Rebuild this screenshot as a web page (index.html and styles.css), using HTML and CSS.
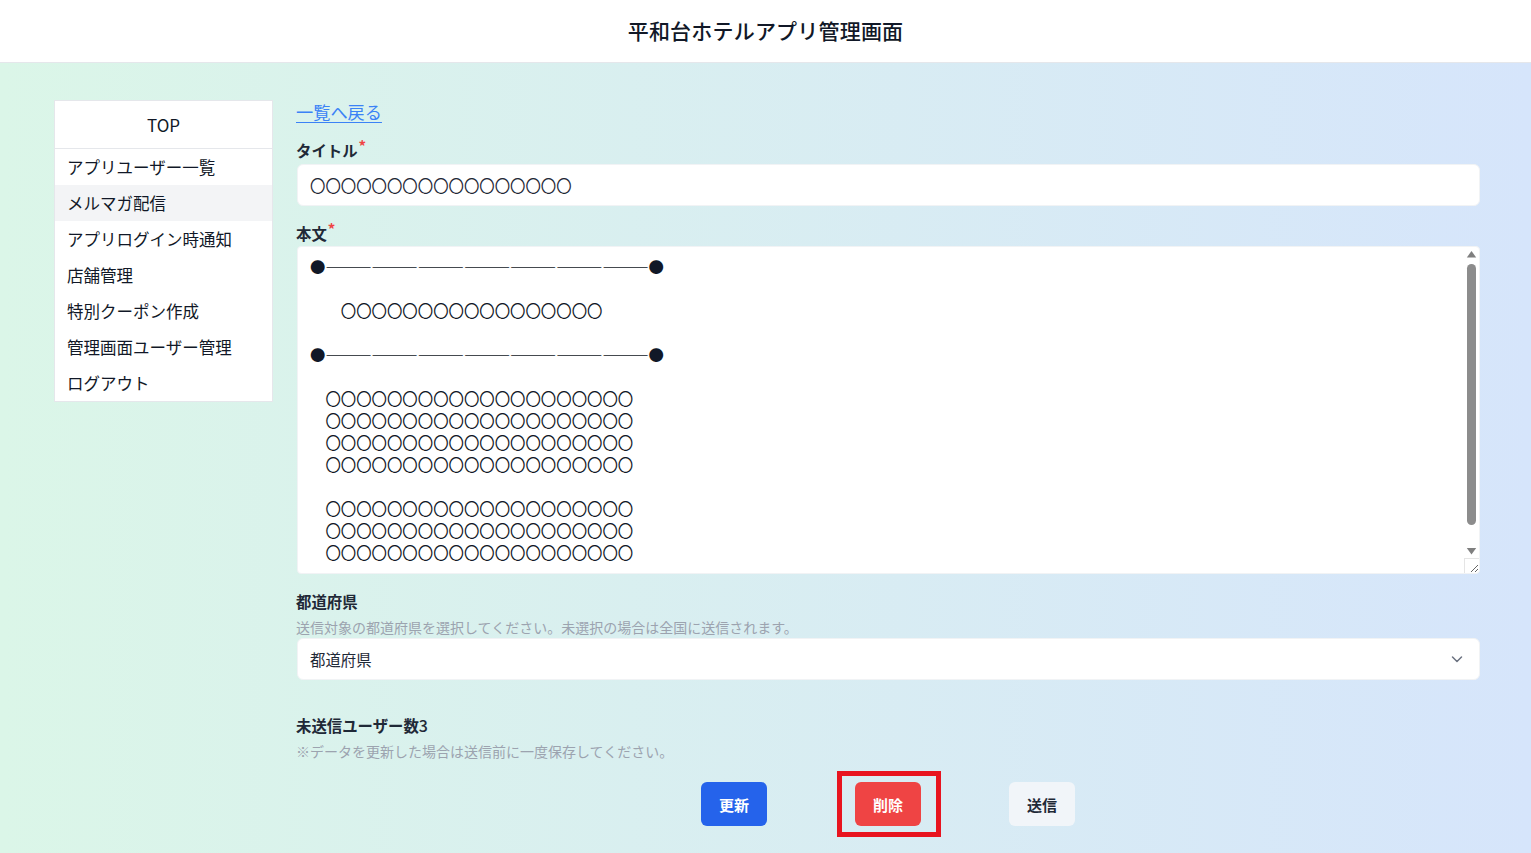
FILE: index.html
```html
<!DOCTYPE html>
<html lang="ja">
<head>
<meta charset="utf-8">
<title>平和台ホテルアプリ管理画面</title>
<link rel="stylesheet" href="styles.css">
</head>
<body>
<header class="header">
  <h1 class="header-title">平和台ホテルアプリ管理画面</h1>
</header>
<div class="page">
  <nav class="sidebar">
    <div class="sidebar-top">TOP</div>
    <ul class="sidebar-list">
      <li class="sidebar-item">アプリユーザー一覧</li>
      <li class="sidebar-item is-active">メルマガ配信</li>
      <li class="sidebar-item">アプリログイン時通知</li>
      <li class="sidebar-item">店舗管理</li>
      <li class="sidebar-item">特別クーポン作成</li>
      <li class="sidebar-item">管理画面ユーザー管理</li>
      <li class="sidebar-item">ログアウト</li>
    </ul>
  </nav>
  <main class="main">
    <a class="back-link" href="#">一覧へ戻る</a>
    <div class="field field-title">
      <label class="label">タイトル<span class="req">*</span></label>
      <input class="input" type="text" value="〇〇〇〇〇〇〇〇〇〇〇〇〇〇〇〇〇">
    </div>
    <div class="field field-body">
      <label class="label">本文<span class="req">*</span></label>
      <div class="textarea-wrap">
        <textarea class="textarea">●―――――――――――――――――――――●

　　〇〇〇〇〇〇〇〇〇〇〇〇〇〇〇〇〇

●―――――――――――――――――――――●

　〇〇〇〇〇〇〇〇〇〇〇〇〇〇〇〇〇〇〇〇
　〇〇〇〇〇〇〇〇〇〇〇〇〇〇〇〇〇〇〇〇
　〇〇〇〇〇〇〇〇〇〇〇〇〇〇〇〇〇〇〇〇
　〇〇〇〇〇〇〇〇〇〇〇〇〇〇〇〇〇〇〇〇

　〇〇〇〇〇〇〇〇〇〇〇〇〇〇〇〇〇〇〇〇
　〇〇〇〇〇〇〇〇〇〇〇〇〇〇〇〇〇〇〇〇
　〇〇〇〇〇〇〇〇〇〇〇〇〇〇〇〇〇〇〇〇</textarea>
        <svg class="scrollbar" width="15" height="312" viewBox="0 0 15 312" aria-hidden="true">
          <path d="M2.8 10.5 L7.5 4 L12.2 10.5 Z" fill="#7f7f7f"/>
          <rect x="3" y="17" width="9" height="261" rx="4.5" fill="#8c8c8c"/>
          <path d="M2.8 301 L7.5 307.5 L12.2 301 Z" fill="#7f7f7f"/>
        </svg>
        <span class="scroll-corner"></span>
      </div>
    </div>
    <div class="field field-pref">
      <label class="label">都道府県</label>
      <p class="help">送信対象の都道府県を選択してください。未選択の場合は全国に送信されます。</p>
      <div class="select">
        <span class="select-text">都道府県</span>
        <svg class="chevron" width="14" height="14" viewBox="0 0 14 14" fill="none"><path d="M2.5 5l4.5 4.5L11.5 5" stroke="#6b7280" stroke-width="1.5" stroke-linecap="round" stroke-linejoin="round"/></svg>
      </div>
    </div>
    <div class="unsent">
      <p class="unsent-title">未送信ユーザー数<span class="num">3</span></p>
      <p class="help">※データを更新した場合は送信前に一度保存してください。</p>
    </div>
    <div class="actions">
      <button class="btn btn-blue">更新</button>
      <button class="btn btn-red is-marked">削除</button>
      <button class="btn btn-gray">送信</button>
    </div>
  </main>
</div>
</body>
</html>
```
FILE: styles.css
```css
* { box-sizing: border-box; }
html, body { margin: 0; padding: 0; }
body {
  font-family: "Noto Sans CJK JP", "Noto Sans", sans-serif;
  color: #111827;
  background: linear-gradient(to right, #dbf6e8, #d6e5fb);
  min-height: 853px;
}
.header {
  height: 63px;
  padding-bottom: 3px;
  background: #ffffff;
  border-bottom: 1px solid #e5e7eb;
  display: flex;
  align-items: center;
  justify-content: center;
}
.header-title {
  margin: 0;
  font-size: 21px;
  font-weight: 500;
  letter-spacing: 0.2px;
  color: #111827;
}
.page {
  display: flex;
  align-items: flex-start;
  padding: 37px 51px 0 54px;
  gap: 23px;
}
.sidebar {
  width: 219px;
  flex: none;
  background: #ffffff;
  border: 1px solid #e5e7eb;
}
.sidebar-top {
  height: 48px;
  border-bottom: 1px solid #e5e7eb;
  display: flex;
  align-items: center;
  justify-content: center;
  font-size: 17px;
}
.sidebar-list { list-style: none; margin: 0; padding: 0; }
.sidebar-item {
  height: 36px;
  display: flex;
  align-items: center;
  padding-left: 12px;
  font-size: 16.5px;
}
.sidebar-item.is-active { background: #f3f4f6; }
.main {
  flex: 1;
  display: flex;
  flex-direction: column;
}
.back-link {
  align-self: flex-start;
  font-size: 17.2px;
  line-height: 24px;
  color: #3b82f6;
  text-decoration: underline;
  text-underline-offset: 3px;
}
.field { display: flex; flex-direction: column; }
.field-title { margin-top: 15px; }
.field-body { margin-top: 16px; }
.field-pref { margin-top: 16px; }
.label {
  font-size: 15.4px;
  line-height: 22px;
  font-weight: 700;
  color: #1f2937;
}
.req {
  color: #ef4444;
  font-size: 15px;
  vertical-align: top;
  line-height: 14px;
  margin-left: 1px;
}
.input {
  margin-top: 3px;
  height: 42px;
  margin-left: 1px;
  border: 1px solid #f1f3f5;
  border-radius: 6px;
  background: #ffffff;
  padding: 0 12px;
  font-family: inherit;
  font-size: 15.4px;
  color: #1f2937;
}
.textarea-wrap {
  position: relative;
  margin-top: 2px;
  margin-left: 1px;
  display: flex;
}
.textarea {
  flex: 1;
  height: 328px;
  border: 1px solid #f1f3f5;
  border-radius: 4px;
  background: #ffffff;
  padding: 8px 12px 10px;
  font-family: inherit;
  font-size: 15.4px;
  line-height: 22px;
  color: #111827;
  white-space: pre;
  resize: vertical;
  overflow: hidden;
}
.scrollbar {
  position: absolute;
  top: 1px;
  right: 1px;
  display: block;
}
.scroll-corner {
  position: absolute;
  right: 1px;
  bottom: 1px;
  width: 15px;
  height: 15px;
  border-left: 1px solid #e5e5e5;
  border-top: 1px solid #e5e5e5;
  pointer-events: none;
}
.help {
  margin: 5px 0 0;
  font-size: 14px;
  line-height: 20px;
  color: #9ca3af;
}
.select {
  margin-top: 1px;
  margin-left: 1px;
  height: 42px;
  border: 1px solid #f1f3f5;
  border-radius: 6px;
  background: #ffffff;
  display: flex;
  align-items: center;
  justify-content: space-between;
  padding: 0 15px 0 12px;
  font-size: 15.4px;
  color: #1f2937;
}
.chevron { display: block; }
.unsent { margin-top: 34px; }
.unsent-title {
  margin: 0;
  font-size: 15.4px;
  line-height: 22px;
  font-weight: 700;
  color: #1f2937;
}
.num { font-weight: 500; font-size: 16px; }
.unsent .help { margin-top: 5px; }
.actions {
  margin-top: 21px;
  display: flex;
  justify-content: center;
  gap: 88px;
}
.btn {
  width: 66px;
  height: 44px;
  border: none;
  border-radius: 6px;
  font-family: inherit;
  font-size: 15px;
  font-weight: 700;
  position: relative;
}
.btn-blue { background: #2563eb; color: #ffffff; }
.btn-red { background: #ef4444; color: #ffffff; }
.btn-gray { background: #f1f5f9; color: #1f2937; }
.is-marked::after {
  content: "";
  position: absolute;
  top: -11px;
  bottom: -11px;
  left: -18px;
  right: -20px;
  border: 5px solid #e8141f;
  pointer-events: none;
}
```
